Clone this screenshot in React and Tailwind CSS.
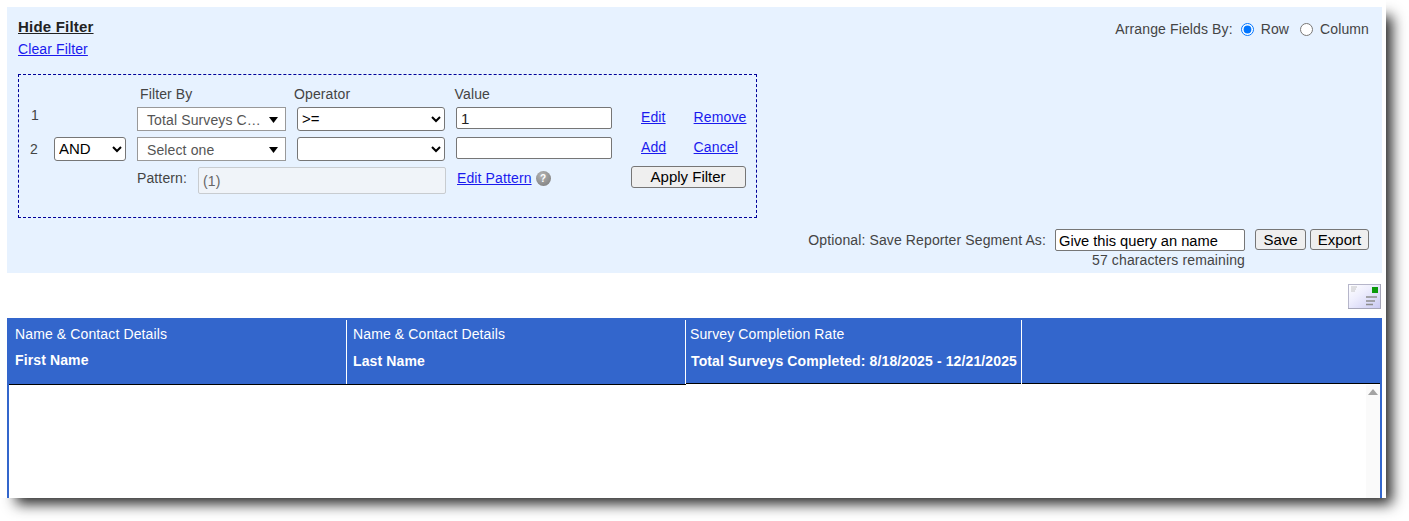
import React from "react";

const Tri = () => (
  <svg width="9" height="6" viewBox="0 0 9 6" className="shrink-0"><path d="M0 0h9L4.5 6z" fill="#000" /></svg>
);

const FakeSelect = ({ children }) => (
  <div className="w-[149px] h-[24px] shrink-0 bg-white border border-[#999] flex items-center justify-between pl-[9px] pr-[7px] pt-[2px] text-[#555]">
    <span>{children}</span>
    <Tri />
  </div>
);

const NativeSelect = ({ value, w }) => (
  <select defaultValue={value} className={`${w} h-[24px] pb-[2px] shrink-0 bg-white border border-[#767676] rounded-[3px] text-black text-[15px] tracking-normal`}>
    <option value={value}>{value}</option>
  </select>
);

const Envelope = () => (
  <svg width="33" height="25" viewBox="0 0 33 25">
    <defs>
      <linearGradient id="env" x1="0" y1="0" x2="1" y2="1">
        <stop offset="0" stopColor="#ffffff" />
        <stop offset="0.4" stopColor="#eeeefd" />
        <stop offset="1" stopColor="#c9c9f2" />
      </linearGradient>
    </defs>
    <rect x="0.5" y="0.5" width="32" height="24" fill="url(#env)" stroke="#b6b6ca" />
    <path d="M0 24.5h32.5V0" fill="none" stroke="#a6a6b8" strokeWidth="1" />
    <rect x="24" y="3" width="6" height="6" fill="#0a9a0a" />
    <path d="M3 3h6M3 5h5M3 7h4" stroke="#c4c4c4" strokeWidth="1" />
    <path d="M18 13h11M18 17h9M18 20.5h7" stroke="#8d8d8d" strokeWidth="1.6" />
  </svg>
);

const HeaderCell = ({ w, pl, top, bottom, bottomClass, extra = "" }) => (
  <div className={`${w} ${pl} ${extra} shrink-0 h-[64px] border-r border-white`}>
    <div className="mt-[5px] leading-[18px]">{top}</div>
    <div className={`font-bold leading-[16px] ${bottomClass}`}>{bottom}</div>
  </div>
);

export default function App() {
  return (
    <div className="w-[1409px] h-[521px] overflow-hidden bg-white font-['Liberation_Sans',Arial,sans-serif]">
      <div className="w-[1386px] h-[498px] bg-white pl-[7px] pr-[4px] pt-[7px] flex flex-col text-[14px] leading-[16px] tracking-[0.12px] text-[#444] shadow-[11px_11px_13px_-5px_rgba(0,0,0,0.85)]">
        <div className="h-[266px] shrink-0 bg-[#e7f2ff] flex flex-col">
          <div className="flex justify-between pl-[11px] pr-[13px] pt-[12px]">
            <div>
              <div className="font-bold text-[15px] tracking-[0.2px] text-[#222] underline leading-[16px]">Hide Filter</div>
              <a href="#" className="block mt-[6px] text-[#1a1aee] underline">Clear Filter</a>
            </div>
            <div className="flex items-center h-[20px]">
              <span>Arrange Fields By:</span>
              <input type="radio" name="arrange" defaultChecked className="w-[13px] h-[13px] m-0 ml-[8px] accent-[#0075ff]" />
              <span className="ml-[7px]">Row</span>
              <input type="radio" name="arrange" className="w-[13px] h-[13px] m-0 ml-[11px]" />
              <span className="ml-[7px]">Column</span>
            </div>
          </div>

          <div className="ml-[11px] mt-[17px] w-[739px] h-[144px] border border-dashed border-[#000099] pt-[11px] shrink-0">
            <div className="flex h-[16px] ml-[121px]">
              <span className="w-[154px]">Filter By</span>
              <span className="w-[160.6px]">Operator</span>
              <span>Value</span>
            </div>
            <div className="flex items-start h-[24px] mt-[5px] pl-[12px]">
              <span className="w-[24px] shrink-0">1</span>
              <div className="w-[82px] shrink-0" />
              <FakeSelect>Total Surveys C…</FakeSelect>
              <NativeSelect value=">=" w="w-[148px] ml-[11px]" />
              <input defaultValue="1" className="w-[156px] h-[22px] ml-[11px] shrink-0 px-[4px] bg-white border border-[#767676] rounded-[2px] text-[#222] text-[15px]" />
              <a href="#" className="ml-[29px] w-[53px] mt-[2px] text-[#1a1aee] underline">Edit</a>
              <a href="#" className="mt-[2px] -ml-[0.4px] text-[#1a1aee] underline">Remove</a>
            </div>
            <div className="flex items-start h-[24px] mt-[6px] pl-[11px]">
              <span className="w-[24px] shrink-0 mt-[4px]">2</span>
              <NativeSelect value="AND" w="w-[72px]" />
              <div className="w-[11px] shrink-0" />
              <FakeSelect>Select one</FakeSelect>
              <NativeSelect value=" " w="w-[148px] ml-[11px]" />
              <input className="w-[156px] h-[22px] ml-[11px] shrink-0 px-[4px] bg-white border border-[#767676] rounded-[2px]" />
              <a href="#" className="ml-[29px] w-[53px] mt-[2px] text-[#1a1aee] underline">Add</a>
              <a href="#" className="mt-[2px] -ml-[0.4px] text-[#1a1aee] underline">Cancel</a>
            </div>
            <div className="flex items-start mt-[6px] ml-[118px]">
              <span className="w-[61px] shrink-0 mt-[3px]">Pattern:</span>
              <input disabled defaultValue="(1)" className="w-[248px] h-[27px] shrink-0 px-[4px] bg-[#f0f4f9] border border-[#c8ccd0] rounded-[2px] text-[#666]" />
              <a href="#" className="ml-[11px] mt-[3px] text-[#1a1aee] underline">Edit Pattern</a>
              <span className="ml-[4px] mt-[4px] w-[15px] h-[15px] shrink-0 rounded-full bg-[radial-gradient(circle_at_40%_30%,#b5b5b5,#777)] text-white text-[10px] leading-[15px] font-bold text-center">?</span>
              <button className="ml-[80px] w-[115px] h-[22px] -mt-[1px] shrink-0 bg-[#efefef] border border-[#767676] rounded-[3px] text-black text-[15px] tracking-normal leading-[18px]">Apply Filter</button>
            </div>
          </div>

          <div className="flex justify-end pr-[13px] mt-[11px]">
            <div className="flex flex-col items-end">
              <div className="flex items-center">
                <span className="mr-[9px]">Optional: Save Reporter Segment As:</span>
                <input defaultValue="Give this query an name" className="w-[190px] h-[22px] px-[3px] pt-[1px] bg-white border border-[#767676] rounded-[2px] text-black text-[14.67px] tracking-normal" />
              </div>
              <span className="mt-[1px]">57 characters remaining</span>
            </div>
            <button className="ml-[10px] w-[51px] h-[21px] bg-[#efefef] border border-[#767676] rounded-[3px] text-black text-[15px] tracking-normal leading-[18px]">Save</button>
            <button className="ml-[4px] w-[59px] h-[21px] bg-[#efefef] border border-[#767676] rounded-[3px] text-black text-[15px] tracking-normal leading-[18px]">Export</button>
          </div>
        </div>

        <div className="h-[45px] shrink-0 flex justify-end items-start pt-[11px] pr-[1px]">
          <Envelope />
        </div>

        <div className="flex-1 min-h-0 flex flex-col bg-[#3366cc] text-white">
          <div className="h-[66px] shrink-0 flex">
            <div className="flex pt-[2px]">
              <HeaderCell w="w-[340px]" pl="pl-[8px]" top="Name & Contact Details" bottom="First Name" bottomClass="mt-[9px]" />
              <HeaderCell w="w-[339px]" pl="pl-[6px]" top="Name & Contact Details" bottom="Last Name" bottomClass="mt-[10px]" />
            </div>
            <div className="flex-1 flex pt-[2px] border-b border-black mr-[2px]">
              <HeaderCell w="w-[336px]" pl="pl-[4px]" top="Survey Completion Rate" bottom="Total Surveys Completed: 8/18/2025 - 12/21/2025" bottomClass="mt-[10px] ml-[1px] whitespace-nowrap" extra="h-[63px]" />
            </div>
          </div>
          <div className="flex-1 min-h-0 mx-[2px] bg-white flex flex-col">
            <div className="w-[677px] h-[1px] bg-black shrink-0" />
            <div className="flex-1 min-h-0 flex justify-end">
              <div className="w-[14px] bg-[#fafafa] flex justify-center pt-[4px]">
                <svg width="10" height="6" viewBox="0 0 10 6"><path d="M0 6L5 0l5 6z" fill="#a3a3a3" /></svg>
              </div>
            </div>
          </div>
        </div>
      </div>
    </div>
  );
}
